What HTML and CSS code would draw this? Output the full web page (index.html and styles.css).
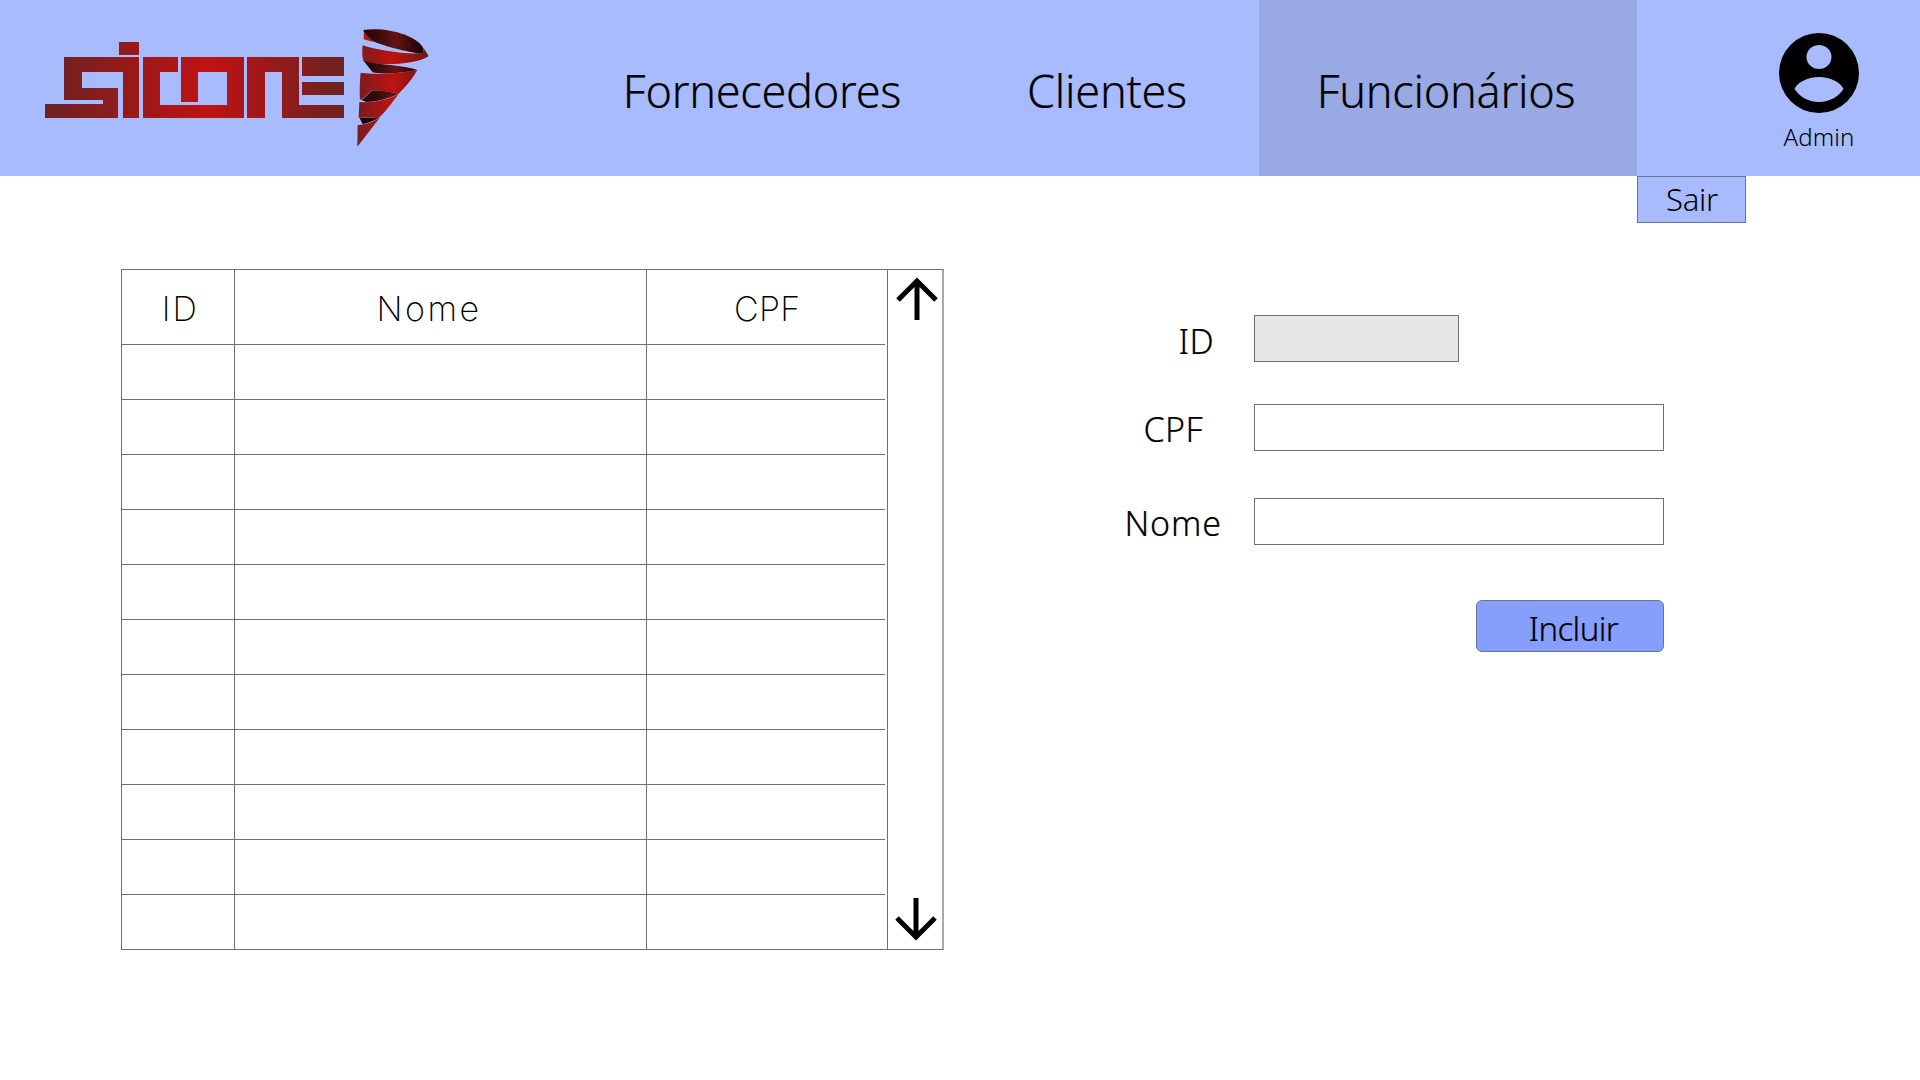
FILE: index.html
```html
<!DOCTYPE html>
<html lang="pt-BR">
<head>
<meta charset="utf-8">
<title>Sicone - Funcionários</title>
<link rel="stylesheet" href="styles.css">
</head>
<body>
<header class="topbar">
  <a class="logo" aria-label="Sicone">
    <svg width="440" height="176" viewBox="0 0 440 176">
      <defs>
        <linearGradient id="word" gradientUnits="userSpaceOnUse" x1="45" y1="0" x2="344" y2="0">
          <stop offset="0" stop-color="#6b2222"/>
          <stop offset="0.55" stop-color="#c01212"/>
          <stop offset="1" stop-color="#6b2222"/>
        </linearGradient>
        <linearGradient id="band" gradientUnits="userSpaceOnUse" x1="415" y1="0" x2="625" y2="0">
          <stop offset="0" stop-color="#7a1c1c"/>
          <stop offset="0.5" stop-color="#c01212"/>
          <stop offset="1" stop-color="#661818"/>
        </linearGradient>
        <linearGradient id="dark" gradientUnits="userSpaceOnUse" x1="425" y1="0" x2="610" y2="0">
          <stop offset="0" stop-color="#150303"/>
          <stop offset="0.55" stop-color="#641414"/>
          <stop offset="1" stop-color="#150303"/>
        </linearGradient>
      </defs>
      <path fill="url(#word)" d="M119 42h20v13h-20zM64 57h75v61h-16V72H82v16h36v30H45v-14h58v-4H64zM143 57h35v15h-18v33h67V72h-29v30h-17V57h63v61h-101zM247 57h52v48h45v13h-62V72h-17v46h-18zM302 57h42v19h-42zM302 82h42v13h-42z"/>
      <g transform="translate(220 20) scale(0.3333)">
        <path fill="url(#dark)" d="M430 30C500 20 590 45 611 86L608 101C590 100 530 90 470 68C450 60 435 50 430 30Z"/>
        <path fill="#b51616" d="M432 36L460 66L431 58Z"/>
        <path fill="url(#band)" d="M428 76C470 90 560 105 608 99L612 86L626 108C600 130 500 140 431 125C426 110 426 90 428 76Z"/>
        <path fill="url(#dark)" d="M432 124C480 134 560 138 592 150C540 162 480 162 458 157Z"/>
        <path fill="url(#band)" d="M422 158C470 165 540 160 592 150C572 185 552 205 535 222C510 215 480 210 455 212C440 225 430 235 420 240C418 210 420 180 422 158Z"/>
        <path fill="url(#dark)" d="M424 240C435 233 445 222 456 212C480 210 510 215 535 222C510 235 470 245 440 246Z"/>
        <path fill="url(#band)" d="M418 246L440 247C480 245 510 236 535 223C515 250 495 278 478 292C450 292 430 294 416 293Z"/>
        <path fill="url(#dark)" d="M419 294L480 292C465 302 445 308 428 313Z"/>
        <path fill="url(#band)" d="M413 315C440 314 460 305 479 294L412 380Z"/>
      </g>
    </svg>
  </a>
  <nav class="nav">
    <a class="nav-item nav-fornecedores">Fornecedores</a>
    <a class="nav-item nav-clientes">Clientes</a>
    <a class="nav-item nav-funcionarios is-active">Funcionários</a>
  </nav>
  <div class="user">
    <svg class="avatar" width="80" height="80" viewBox="0 0 80 80">
      <path fill="#000" fill-rule="evenodd" d="M40 0a40 40 0 1 1 0 80a40 40 0 1 1 0-80ZM40 12a12.500 12 0 1 0 0 24a12.500 12 0 1 0 0-24ZM40 44C28 44 18 50 15.500 56C20 63 29 69 40 69C51 69 60 63 64.500 56C62 50 52 44 40 44Z"/>
    </svg>
    <span class="user-name">Admin</span>
  </div>
</header>

<button class="logout" type="button">Sair</button>

<main class="content">
  <section class="grid-box">
    <table class="grid">
      <thead>
        <tr><th class="col-id">ID</th><th class="col-nome">Nome</th><th class="col-cpf">CPF</th></tr>
      </thead>
      <tbody>
        <tr><td></td><td></td><td></td></tr>
        <tr><td></td><td></td><td></td></tr>
        <tr><td></td><td></td><td></td></tr>
        <tr><td></td><td></td><td></td></tr>
        <tr><td></td><td></td><td></td></tr>
        <tr><td></td><td></td><td></td></tr>
        <tr><td></td><td></td><td></td></tr>
        <tr><td></td><td></td><td></td></tr>
        <tr><td></td><td></td><td></td></tr>
        <tr><td></td><td></td><td></td></tr>
        <tr><td></td><td></td><td></td></tr>
      </tbody>
    </table>
    <div class="scroller">
      <svg class="arrow arrow-up" width="44" height="44" viewBox="0 0 44 44">
        <path fill="none" stroke="#000" stroke-width="5" d="M22 43V4M3 23L22 4L41 23"/>
      </svg>
      <svg class="arrow arrow-down" width="44" height="44" viewBox="0 0 44 44">
        <path fill="none" stroke="#000" stroke-width="5" d="M22 1V40M3 21L22 40L41 21"/>
      </svg>
    </div>
  </section>

  <form class="form">
    <div class="form-row">
      <label class="form-label label-id" for="f-id">ID</label>
      <input class="field field-short" id="f-id" type="text" disabled>
    </div>
    <div class="form-row">
      <label class="form-label label-cpf" for="f-cpf">CPF</label>
      <input class="field" id="f-cpf" type="text">
    </div>
    <div class="form-row row-nome">
      <label class="form-label label-nome" for="f-nome">Nome</label>
      <input class="field" id="f-nome" type="text">
    </div>
    <div class="form-actions">
      <button class="submit" type="button">Incluir</button>
    </div>
  </form>
</main>
</body>
</html>
```
FILE: styles.css
```css
* { box-sizing: border-box; }

html, body { margin: 0; padding: 0; }

body {
  width: 1920px;
  height: 1080px;
  overflow: hidden;
  background: #fff;
  color: #000;
  font-family: "Noto Sans", "Open Sans", sans-serif;
  font-weight: 300;
}

.topbar {
  display: flex;
  height: 176px;
  background: #a8bbff;
}

.logo {
  display: block;
  width: 562px;
  height: 176px;
}

.logo svg { display: block; }

.nav {
  display: grid;
  grid-template-columns: 400px 290px 378px;
  column-gap: 0;
}

.nav-item {
  display: flex;
  align-items: center;
  justify-content: center;
  font-size: 45px;
  letter-spacing: -0.25px;
  line-height: 1;
  padding-top: 4px;
  -webkit-text-stroke: 0.2px #000;
}

.nav-funcionarios { margin-left: 7px; margin-right: -7px; padding-right: 4px; }

.nav-item.is-active { background: #98a9e3; }

.user {
  display: flex;
  flex-direction: column;
  align-items: center;
  width: 120px;
  margin-left: 129px;
  padding-top: 33px;
}

.avatar { display: block; }

.user-name {
  margin-top: 8px;
  font-size: 24px;
  line-height: 32px;
  letter-spacing: 0.1px;
}

.logout {
  display: block;
  width: 109px;
  height: 47px;
  margin: 0 0 0 1637px;
  padding: 0 0 0 1px;
  background: #a8bbff;
  border: 1px solid #6b7590;
  color: #000;
  font-family: inherit;
  font-weight: 300;
  font-size: 31px;
  letter-spacing: -0.3px;
  line-height: 1;
}

.content {
  display: flex;
  align-items: flex-start;
  margin-top: 46px;
  padding-left: 121px;
}

.grid-box {
  display: flex;
  width: 823px;
  height: 681px;
  border: 1px solid #707070;
  border-right: 2px solid #a8a8a8;
}

.grid {
  width: 763px;
  border-collapse: collapse;
  table-layout: fixed;
  align-self: flex-start;
}

.grid th,
.grid td {
  padding: 0;
  border-bottom: 1px solid #707070;
  border-right: 1px solid #707070;
}

.grid th:last-child,
.grid td:last-child { border-right: 0; }

.grid tbody tr:last-child td { border-bottom: 0; }

.grid th {
  height: 74px;
  padding-top: 3px;
  font-family: "Inter", sans-serif;
  font-weight: 200;
  font-size: 34px;
}

.grid td { height: 55px; }

.grid .col-id { width: 112px; padding-left: 5px; letter-spacing: 2px; }
.grid .col-nome { width: 412px; padding-right: 22px; letter-spacing: 2.5px; }
.grid .col-cpf { padding-left: 3px; letter-spacing: 0.3px; }

.scroller {
  display: flex;
  flex-direction: column;
  justify-content: space-between;
  width: 55px;
  margin-left: 2px;
  border-left: 1px solid #707070;
}

.arrow { display: block; }
.arrow-up { margin: 7px 0 0 7px; }
.arrow-down { margin: 0 0 8px 6px; }

.form {
  display: flex;
  flex-direction: column;
  width: 564px;
  margin-left: 156px;
  padding-top: 46px;
}

.form-row {
  display: flex;
  align-items: center;
  margin-bottom: 42px;
}

.row-nome { margin-top: 5px; margin-bottom: 0; }

.form-label {
  width: 154px;
  padding-top: 4px;
  font-size: 34px;
  letter-spacing: 0.4px;
  line-height: 1;
  text-align: right;
  -webkit-text-stroke: 0.2px #000;
}

.label-id { padding-right: 40px; }
.label-cpf { padding-right: 51px; padding-top: 2px; }
.label-nome { padding-right: 32px; letter-spacing: 0.9px; padding-top: 3px; }

.field {
  display: block;
  width: 410px;
  height: 47px;
  margin: 0;
  background: #fff;
  border: 1px solid #707070;
  border-radius: 0;
}

.field-short {
  width: 205px;
  background: #e6e6e6;
}

.form-actions {
  display: flex;
  justify-content: flex-end;
  margin-top: 55px;
}

.submit {
  width: 188px;
  height: 52px;
  padding: 4px 0 0 7px;
  background: #869efc;
  border: 1px solid #6b7590;
  border-radius: 6px;
  color: #000;
  font-family: inherit;
  font-weight: 300;
  font-size: 33px;
  letter-spacing: -0.6px;
  line-height: 1;
  -webkit-text-stroke: 0.2px #000;
}
```
